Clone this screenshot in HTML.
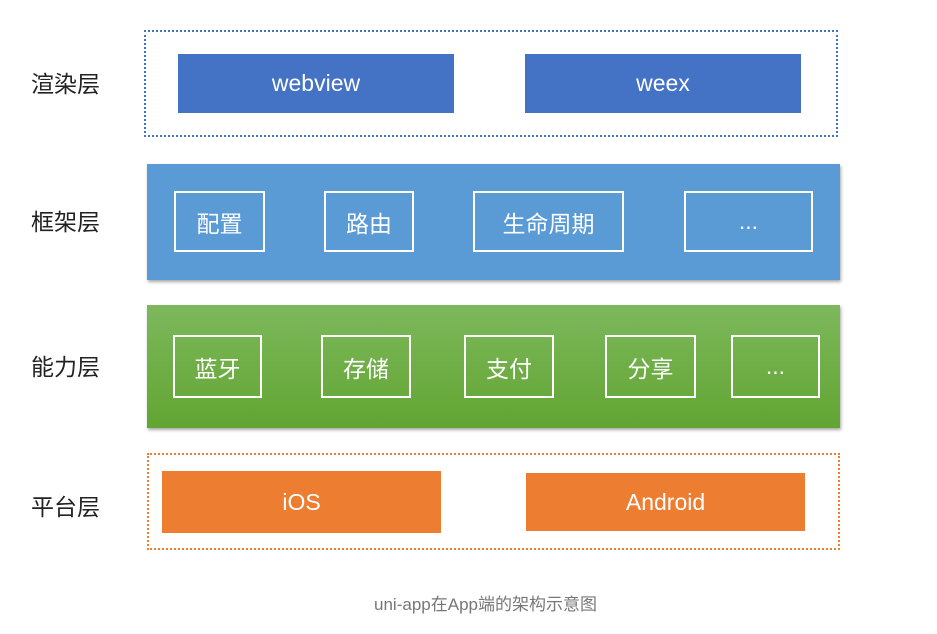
<!DOCTYPE html><html><head><meta charset="utf-8"><style>
body{margin:0;width:937px;height:634px;background:#fff;position:relative;font-family:"Liberation Sans","Noto Sans CJK SC",sans-serif;overflow:hidden}
.a{position:absolute;box-sizing:border-box}
.lbl{position:absolute;left:31px;font-size:23px;color:#222;line-height:30px}
.f{display:flex;align-items:center;justify-content:center;color:#fff;font-size:23px}
.ib{border:2px solid #fff}
</style></head><body>
<div class="lbl" style="top:69px">渲染层</div>
<div class="lbl" style="top:207px">框架层</div>
<div class="lbl" style="top:352px">能力层</div>
<div class="lbl" style="top:492px">平台层</div>

<div class="a" style="left:144px;top:30px;width:694px;height:107px;border:2px dotted #4472c4"></div>
<div class="a f" style="left:178px;top:54px;width:276px;height:59px;background:#4472c4">webview</div>
<div class="a f" style="left:525px;top:54px;width:276px;height:59px;background:#4472c4">weex</div>

<div class="a" style="left:147px;top:164px;width:693px;height:116px;background:#5b9bd5;box-shadow:1px 2px 3px rgba(0,0,0,.35)"></div>
<div class="a f ib" style="left:174px;top:191px;width:91px;height:61px">配置</div>
<div class="a f ib" style="left:324px;top:191px;width:90px;height:61px">路由</div>
<div class="a f ib" style="left:473px;top:191px;width:151px;height:61px">生命周期</div>
<div class="a f ib" style="left:684px;top:191px;width:129px;height:61px">...</div>

<div class="a" style="left:147px;top:305px;width:693px;height:123px;background:linear-gradient(#7db85c,#62a532);box-shadow:1px 2px 3px rgba(0,0,0,.35)"></div>
<div class="a f ib" style="left:173px;top:335px;width:89px;height:63px">蓝牙</div>
<div class="a f ib" style="left:321px;top:335px;width:90px;height:63px">存储</div>
<div class="a f ib" style="left:464px;top:335px;width:90px;height:63px">支付</div>
<div class="a f ib" style="left:605px;top:335px;width:91px;height:63px">分享</div>
<div class="a f ib" style="left:731px;top:335px;width:89px;height:63px">...</div>

<div class="a" style="left:147px;top:453px;width:693px;height:97px;border:2px dotted #ed7d31"></div>
<div class="a f" style="left:162px;top:471px;width:279px;height:62px;background:#ed7d31">iOS</div>
<div class="a f" style="left:526px;top:473px;width:279px;height:58px;background:#ed7d31">Android</div>

<div class="a" style="left:0;width:937px;top:590px;text-align:center;font-size:17px;color:#777;padding-left:34px">uni-app在App端的架构示意图</div>
</body></html>
